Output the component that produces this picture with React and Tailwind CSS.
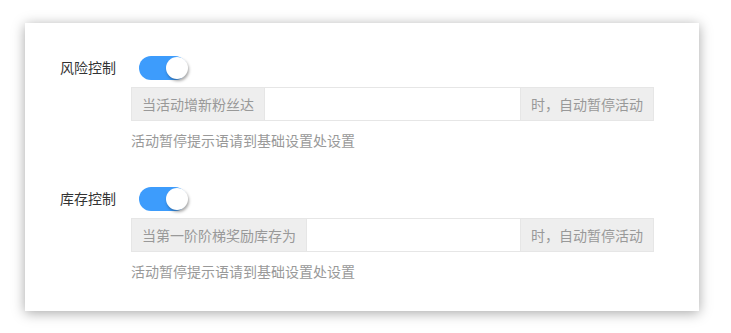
export default function App() {
  const font = { fontFamily: '"Noto Sans CJK SC", "Microsoft YaHei", sans-serif' };
  const Section = ({ label, prepend }) => (
    <div className="flex">
      <div className="w-[106px] pr-[15px] flex justify-end h-[24px] items-start pt-[4px] text-[14px] text-[#333] leading-none">
        {label}
      </div>
      <div className="flex flex-col">
        <div className="h-[24px] flex items-center">
          <div className="ml-[8px] w-[48px] h-[24px] rounded-full bg-[#3d9cfc] relative">
            <div className="absolute right-[-1px] top-[1px] w-[22px] h-[22px] rounded-full bg-white shadow-[1px_2px_3px_rgba(0,0,0,0.35)]" />
          </div>
        </div>
        <div className="mt-[7px] flex w-[523px] h-[34px] text-[14px] text-[#999]">
          <div className="shrink-0 px-[10px] flex items-center bg-[#eeeeee] border border-[#e6e6e6] leading-none whitespace-nowrap">
            {prepend}
          </div>
          <div className="flex-1 border-y border-[#e6e6e6] bg-white" />
          <div className="shrink-0 w-[134px] flex items-center justify-center bg-[#eeeeee] border border-[#e6e6e6] leading-none whitespace-nowrap">
            时，自动暂停活动
          </div>
        </div>
        <div className="h-[20px] mt-[9px] flex items-center text-[14px] text-[#999] leading-none whitespace-nowrap">
          活动暂停提示语请到基础设置处设置
        </div>
      </div>
    </div>
  );
  return (
    <div className="w-[731px] h-[333px] bg-white pt-[23px] pl-[25px]" style={font}>
      <div className="w-[674px] h-[288px] bg-white shadow-[0_2px_12px_rgba(0,0,0,0.35)] pt-[33px] flex flex-col gap-[37px]">
        <Section label="风险控制" prepend="当活动增新粉丝达" />
        <Section label="库存控制" prepend="当第一阶阶梯奖励库存为" />
      </div>
    </div>
  );
}
